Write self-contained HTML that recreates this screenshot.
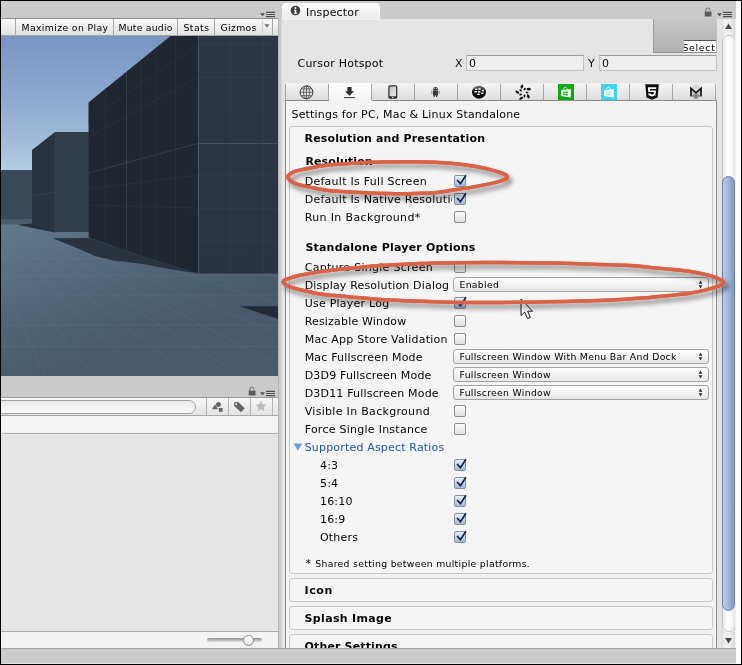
<!DOCTYPE html><html><head><meta charset="utf-8"><title>Inspector</title><style>
html,body{margin:0;padding:0;background:#000;}
#root{will-change:transform;position:relative;width:742px;height:665px;overflow:hidden;background:#000;font-family:"DejaVu Sans","Liberation Sans",sans-serif;font-size:11px;color:#050505;}
#root div,#root span,#root svg{position:absolute;box-sizing:border-box;}
.t{white-space:nowrap;line-height:13px;height:13px;letter-spacing:.18px;}
.b{font-weight:bold;letter-spacing:.14px;}
.m{font-size:9.3px;letter-spacing:.3px;color:#000;}
.cb{width:12px;height:12px;left:454px;border:1px solid #8b8b8b;border-radius:2px;background:linear-gradient(#fdfdfd,#dedede);}
.cb.on{border-color:#87909f;background:linear-gradient(#e4eefb,#9dbce6);}
.pop{left:453px;width:256px;height:15px;border:1px solid #a3a3a3;border-radius:3px;background:linear-gradient(#ffffff,#e6e6e6);}
.grp{left:289px;width:424px;border:1px solid #c6c6c6;border-radius:3px;background:#f5f5f5;}
.fld{height:16px;border:1px solid #c2c2c2;border-top-color:#9d9d9d;background:#eeeeee;}
.vs{width:1px;background:#a9a9a9;}
</style></head><body><div id="root">
<div style="left:1px;top:1px;width:735px;height:663px;background:#cbcbcb"></div>
<div style="left:736px;top:1px;width:5px;height:663px;background:#fff"></div>
<div style="left:1px;top:663px;width:735px;height:1px;background:#e4e4e4"></div>
<div style="left:1px;top:18px;width:277px;height:1px;background:#909090"></div>
<div style="left:1px;top:19px;width:277px;height:17px;background:linear-gradient(#f9f9f9,#e2e2e2);border-bottom:1px solid #a5a5a5"></div>
<div class="vs" style="left:15px;top:19px;height:16px"></div>
<div class="vs" style="left:113px;top:19px;height:16px"></div>
<div class="vs" style="left:177px;top:19px;height:16px"></div>
<div class="vs" style="left:214px;top:19px;height:16px"></div>
<div class="vs" style="left:272px;top:19px;height:16px"></div>
<div class="vs" style="left:262px;top:21px;height:12px;background:#cfcfcf"></div>
<span class="t m" style="left:21.5px;top:21px;letter-spacing:.37px">Maximize on Play</span>
<span class="t m" style="left:118.5px;top:21px;letter-spacing:.22px">Mute audio</span>
<span class="t m" style="left:183.5px;top:21px;letter-spacing:.44px">Stats</span>
<span class="t m" style="left:220.5px;top:21px;letter-spacing:.33px">Gizmos</span>
<svg style="left:263.5px;top:24px" width="6" height="4" viewBox="0 0 6 4"><path d="M.4 .3h5.2L3 3.6z" fill="#707070"/></svg>
<svg style="left:260px;top:11px" width="16" height="8" viewBox="0 0 16 8"><path d="M0 2.2h5L2.5 5.2z" fill="#505050"/><path d="M6 1.3h9M6 3.5h9M6 5.7h9" stroke="#505050" stroke-width="1.2"/></svg>
<svg style="left:1px;top:36px" width="277" height="340" viewBox="1 36 277 340">
<defs>
<linearGradient id="sky" gradientUnits="userSpaceOnUse" x1="0" y1="36" x2="0" y2="174"><stop offset="0" stop-color="#7895c3"/><stop offset=".45" stop-color="#8ca9cf"/><stop offset=".8" stop-color="#a3bfdb"/><stop offset="1" stop-color="#b6d0e6"/></linearGradient>
<linearGradient id="gnd" gradientUnits="userSpaceOnUse" x1="0" y1="224" x2="60" y2="376"><stop offset="0" stop-color="#62798d"/><stop offset=".5" stop-color="#52677a"/><stop offset="1" stop-color="#47596a"/></linearGradient>
<linearGradient id="ff" x1="0" y1="0" x2="0" y2="1"><stop offset="0" stop-color="#2c3642"/><stop offset="1" stop-color="#2a333f"/></linearGradient>
<clipPath id="gc"><rect x="1" y="219" width="277" height="157"/></clipPath>
</defs>
<rect x="1" y="36" width="277" height="195" fill="url(#sky)"/>
<rect x="1" y="219" width="277" height="157" fill="url(#gnd)"/>
<g stroke="#7a90a4" stroke-width=".8" fill="none" opacity=".2" clip-path="url(#gc)"><path d="M-35.2,224L-51,376M-29.4,224L-3,376M-23.5,224L45,376M-17.8,224L92,376M-12.0,224L140,376M-6.1,224L189,376M0.3,224L241,376M7.4,224L300,376M17.1,224L380,376M31.7,224L500,376M56.0,224L700,376"/><path d="M1,246.5H278M1,258.5H278M1,275.5H278M1,295H278M1,325H278M1,346.5H278"/></g>
<polygon points="1,170 32,170 32,219 1,219" fill="#3a4959"/>
<rect x="1" y="219" width="31" height="5.5" fill="#4a5d6f"/>
<polygon points="32,150 55,132 55,232 32,224" fill="#29333f"/>
<polygon points="55,132 89,132 89,232 55,232" fill="#323e4a"/>
<polygon points="17,224.7 32,223.6 55,231.7 55,232.6 40,229.5" fill="#252e39"/>
<polygon points="52.8,238.3 88.7,238 140,255.5 198.5,273.5 170,269.3 140,263.4 113.2,260.4 94.3,255.7 75,247.2" fill="#293340"/>
<polygon points="88.5,102.5 170.5,36 198.5,36 198.5,273.5 140,255.5 88.7,237.7" fill="#20262f"/>
<polygon points="198.5,36 278,36 278,273.5 198.5,273.5" fill="url(#ff)"/>
<polygon points="239.5,306.2 278,306.2 278,319" fill="#222a35"/>
<g stroke="#3b4955" stroke-width="1" fill="none" opacity=".32">
<path d="M198.5,44.5H278M198.5,77.5H278M198.5,110H278M198.5,175.5H278M198.5,208.5H278M198.5,241.5H278M230.5,36V273M263.5,36V273"/>
</g>
<path d="M198.5,36V273.5M198.5,143.5H278" stroke="#4a5b61" stroke-width="1" fill="none" opacity=".8"/>
<path d="M88.5,172.9L198.5,143.3M126.5,72V250" stroke="#3b494f" stroke-width="1" fill="none" opacity=".75"/>
<g stroke="#29323c" stroke-width="1" fill="none" opacity=".8">
<path d="M105.5,89V243M156.5,47V260M175.5,36V266M141,60V255M88.5,137L198.5,77M88.5,205L198.5,208M88.5,120L198.5,44M88.5,189L198.5,175"/>
</g>
<g stroke="#3d4a57" stroke-width="1" fill="none" opacity=".6">
<path d="M55,132V232M32,196L55,192H89M1,196H32M72,132V232M16,170V219"/>
</g>
</svg>
<svg style="left:247.8px;top:386.1px" width="9" height="10" viewBox="0 0 9 10"><path d="M1.8 4.8V3A2.05 2.05 0 0 1 5.9 3V3.6" fill="none" stroke="#6c6c6c" stroke-width="1"/><rect x=".7" y="4.6" width="6.8" height="4.9" fill="#5c5c5c"/></svg>
<svg style="left:260px;top:390.2px" width="16" height="8" viewBox="0 0 16 8"><path d="M0 2.2h5L2.5 5.2z" fill="#505050"/><path d="M6 1.3h9M6 3.5h9M6 5.7h9" stroke="#505050" stroke-width="1.2"/></svg>
<div style="left:1px;top:397px;width:277px;height:1px;background:#9a9a9a"></div>
<div style="left:1px;top:398px;width:277px;height:18px;background:linear-gradient(#f8f8f8,#e3e3e3);border-bottom:1px solid #a8a8a8"></div>
<div style="left:-20px;top:400px;width:216px;height:14px;border:1px solid #a0a0a0;border-radius:7px;background:linear-gradient(#e9e9e9,#fbfbfb)"></div>
<div class="vs" style="left:206px;top:398px;height:17px;background:#b4b4b4"></div>
<div class="vs" style="left:228px;top:398px;height:17px;background:#b4b4b4"></div>
<div class="vs" style="left:250px;top:398px;height:17px;background:#b4b4b4"></div>
<div class="vs" style="left:272px;top:398px;height:17px;background:#b4b4b4"></div>
<svg style="left:211px;top:401px" width="13" height="12" viewBox="0 0 13 12"><circle cx="7.4" cy="3.4" r="2.5" fill="#676767"/><path d="M1 8.3L4 3.2L7 8.3z" fill="#676767"/><rect x="7.8" y="7" width="3.8" height="3.8" fill="#676767"/></svg>
<svg style="left:233px;top:401px" width="13" height="12" viewBox="0 0 13 12"><path d="M1 1.2L5 0.8L11.8 7.2L8 11.2L1.2 5z" fill="#666"/><circle cx="3.2" cy="3" r="1" fill="#eee"/></svg>
<svg style="left:255px;top:400px" width="12" height="12" viewBox="0 0 12 12"><path d="M6 .6L7.5 4.4L11.6 4.6L8.4 7.2L9.5 11.2L6 8.9L2.5 11.2L3.6 7.2L.4 4.6L4.5 4.4z" fill="#b9b9b9"/></svg>
<div style="left:1px;top:416px;width:277px;height:17px;background:#f4f4f4"></div>
<div style="left:1px;top:433px;width:277px;height:1px;background:#b2b2b2"></div>
<div style="left:1px;top:434px;width:277px;height:197px;background:#e5e5e5"></div>
<div style="left:1px;top:631px;width:277px;height:1px;background:#a9a9a9"></div>
<div style="left:1px;top:632px;width:277px;height:16px;background:#f3f3f3"></div>
<div style="left:207px;top:638px;width:55px;height:4px;border-radius:2px;background:linear-gradient(#8c8c8c,#bdbdbd 55%,#dcdcdc)"></div>
<div style="left:243.2px;top:634.5px;width:11px;height:11px;border:1px solid #8c8c8c;border-radius:6px;background:linear-gradient(#ffffff,#e4e4e4)"></div>
<div style="left:1px;top:648px;width:735px;height:1px;background:#a2a2a2"></div>
<div style="left:1px;top:649px;width:735px;height:14px;background:#cbcbcb"></div>
<div style="left:278px;top:19px;width:1px;height:629px;background:#b3b3b3"></div>
<div style="left:282px;top:19px;width:454px;height:629px;background:#e5e5e5"></div>
<div style="left:281px;top:19px;width:1px;height:629px;background:#d6d6d6"></div>
<div style="left:282px;top:3px;width:98px;height:17px;border:1px solid #f8f8f8;border-bottom:1px solid #f1f1f1;border-radius:4px 4px 0 0;background:linear-gradient(#fbfbfb,#ebebeb)"></div>
<svg style="left:290px;top:5px" width="11" height="11" viewBox="0 0 11 11"><circle cx="5.5" cy="5.5" r="4.8" fill="#3e3e3e"/><circle cx="5.4" cy="3.1" r="1" fill="#fff"/><path d="M4 4.8h2.3v3h.9v1H3.9v-1h.9v-2H4z" fill="#fff"/></svg>
<span class="t" style="left:306px;top:6px">Inspector</span>
<svg style="left:703.5px;top:7.2px" width="9" height="10" viewBox="0 0 9 10"><path d="M1.8 4.8V3A2.05 2.05 0 0 1 5.9 3V3.6" fill="none" stroke="#6c6c6c" stroke-width="1"/><rect x=".7" y="4.6" width="6.8" height="4.9" fill="#5c5c5c"/></svg>
<svg style="left:717px;top:11px" width="16" height="8" viewBox="0 0 16 8"><path d="M0 2.2h5L2.5 5.2z" fill="#505050"/><path d="M6 1.3h9M6 3.5h9M6 5.7h9" stroke="#505050" stroke-width="1.2"/></svg>
<div style="left:653px;top:19px;width:64px;height:34px;background:linear-gradient(#c6c6c6,#b3b3b3);border-left:1px solid #9b9b9b;border-bottom:1px solid #8f8f8f"></div>
<div style="left:684px;top:40px;width:32px;height:12px;background:#fff;border-top:1px solid #555;overflow:hidden"><span class="t m" style="left:-1.5px;top:-0.5px;color:#000;letter-spacing:.72px">Select</span></div>
<span class="t" style="left:297.5px;top:57px;letter-spacing:.22px">Cursor Hotspot</span>
<span class="t" style="left:455px;top:57px">X</span>
<div class="fld" style="left:466px;top:55px;width:118px"></div><span class="t" style="left:469px;top:57px">0</span>
<span class="t" style="left:588px;top:57px">Y</span>
<div class="fld" style="left:599px;top:55px;width:118px"></div><span class="t" style="left:602px;top:57px">0</span>
<div style="left:285px;top:83px;width:432px;height:18px;background:linear-gradient(#f4f4f4,#dcdcdc);border-top:1px solid #f0f0f0"></div>
<div style="left:329px;top:83px;width:42px;height:18px;background:linear-gradient(#ffffff,#f3f3f3)"></div>
<div class="vs" style="left:285px;top:84px;height:16px;background:#a6a6a6"></div>
<div class="vs" style="left:328px;top:84px;height:16px;background:#a6a6a6"></div>
<div class="vs" style="left:371px;top:84px;height:16px;background:#a6a6a6"></div>
<div class="vs" style="left:414px;top:84px;height:16px;background:#a6a6a6"></div>
<div class="vs" style="left:457px;top:84px;height:16px;background:#a6a6a6"></div>
<div class="vs" style="left:500px;top:84px;height:16px;background:#a6a6a6"></div>
<div class="vs" style="left:543px;top:84px;height:16px;background:#a6a6a6"></div>
<div class="vs" style="left:586px;top:84px;height:16px;background:#a6a6a6"></div>
<div class="vs" style="left:629px;top:84px;height:16px;background:#a6a6a6"></div>
<div class="vs" style="left:672px;top:84px;height:16px;background:#a6a6a6"></div>
<div class="vs" style="left:715px;top:84px;height:16px;background:#a6a6a6"></div>
<svg style="left:299px;top:85px" width="15" height="15" viewBox="0 0 15 15"><g fill="none" stroke="#484848" stroke-width=".75"><circle cx="7.5" cy="7.3" r="6.4" fill="#e4e4e4" stroke="#333" stroke-width="1"/><ellipse cx="7.5" cy="7.3" rx="3" ry="6.4"/><path d="M7.5 .9v12.8M1.1 7.3h12.8M2.2 3.9h10.6M2.2 10.7h10.6"/></g></svg>
<svg style="left:343px;top:86px" width="13" height="13" viewBox="0 0 13 13"><path d="M4.4 1h4.2v4.3h2.5L6.5 9.8L1.9 5.3h2.5z" fill="#2d2d2d"/><path d="M1 11.6h11" stroke="#3a3a3a" stroke-width="1"/></svg>
<svg style="left:387.8px;top:85px" width="10" height="15" viewBox="0 0 10 15"><defs><linearGradient id="ph" x1="0" y1="0" x2="1" y2="1"><stop offset="0" stop-color="#c4c4c4"/><stop offset="1" stop-color="#ececec"/></linearGradient></defs><rect x=".3" y=".2" width="9" height="13.6" rx="1.7" fill="#2b2b2b"/><rect x="1.5" y="1.5" width="6.6" height="9.8" fill="url(#ph)"/><circle cx="4.8" cy="12.5" r=".75" fill="#f0f0f0"/></svg>
<svg style="left:430px;top:86px" width="11" height="12" viewBox="0 0 11 12"><g fill="#3b3b3b"><path d="M3 3.9A2.5 2.9 0 0 1 8 3.9z"/><rect x="3" y="4.3" width="5" height="5.2" rx=".5"/><rect x="3.7" y="9" width="1.3" height="2" rx=".5"/><rect x="6" y="9" width="1.3" height="2" rx=".5"/></g><rect x="1.3" y="4.4" width="1.1" height="3.6" rx=".5" fill="#8e8e8e"/><rect x="8.6" y="4.4" width="1.1" height="3.6" rx=".5" fill="#8e8e8e"/><circle cx="4.4" cy="2.5" r=".55" fill="#f4f4f4"/><circle cx="6.6" cy="2.5" r=".55" fill="#f4f4f4"/></svg>
<svg style="left:471px;top:85px" width="16" height="15" viewBox="0 0 16 15"><defs><linearGradient id="bb" x1="0" y1="0" x2="0" y2="1"><stop offset="0" stop-color="#6e7b7b"/><stop offset=".42" stop-color="#141616"/><stop offset="1" stop-color="#000"/></linearGradient></defs><ellipse cx="8" cy="7.2" rx="7.6" ry="7" fill="#fbfbfb"/><ellipse cx="8" cy="7.2" rx="7" ry="6.5" fill="url(#bb)"/><g fill="#fff"><rect x="4" y="3.4" width="2.4" height="1.6" rx=".6"/><rect x="7.3" y="3.2" width="2.4" height="1.6" rx=".6"/><rect x="3.5" y="5.9" width="2.4" height="1.6" rx=".6"/><rect x="7" y="5.9" width="2.4" height="1.6" rx=".6"/><rect x="10.7" y="4.8" width="2.4" height="1.6" rx=".6"/><rect x="6.3" y="8.5" width="2.4" height="1.6" rx=".6"/><rect x="10.1" y="7.45" width="2.4" height="1.6" rx=".6"/></g></svg>
<svg style="left:514.6px;top:84.4px" width="17" height="17" viewBox="-8.5 -8.5 17 17"><g fill="#141414"><path d="M-2.5,0Q-1.2,-1.35 0,-1.35Q1.2,-1.35 2.5,0Q1.2,1.35 0,1.35Q-1.2,1.35 -2.5,0Z" transform="rotate(-104.7) translate(6.2,0) rotate(33)"/><path d="M-1.7,0Q-.8,-.95 0,-.95Q.8,-.95 1.7,0Q.8,.95 0,.95Q-.8,.95 -1.7,0Z" transform="rotate(-71.0) translate(3.6,0) rotate(17)"/><path d="M-2.5,0Q-1.2,-1.35 0,-1.35Q1.2,-1.35 2.5,0Q1.2,1.35 0,1.35Q-1.2,1.35 -2.5,0Z" transform="rotate(-32.7) translate(6.2,0) rotate(33)"/><path d="M-1.7,0Q-.8,-.95 0,-.95Q.8,-.95 1.7,0Q.8,.95 0,.95Q-.8,.95 -1.7,0Z" transform="rotate(1.0) translate(3.6,0) rotate(17)"/><path d="M-2.5,0Q-1.2,-1.35 0,-1.35Q1.2,-1.35 2.5,0Q1.2,1.35 0,1.35Q-1.2,1.35 -2.5,0Z" transform="rotate(39.3) translate(6.2,0) rotate(33)"/><path d="M-1.7,0Q-.8,-.95 0,-.95Q.8,-.95 1.7,0Q.8,.95 0,.95Q-.8,.95 -1.7,0Z" transform="rotate(73.0) translate(3.6,0) rotate(17)"/><path d="M-2.5,0Q-1.2,-1.35 0,-1.35Q1.2,-1.35 2.5,0Q1.2,1.35 0,1.35Q-1.2,1.35 -2.5,0Z" transform="rotate(111.3) translate(6.2,0) rotate(33)"/><path d="M-1.7,0Q-.8,-.95 0,-.95Q.8,-.95 1.7,0Q.8,.95 0,.95Q-.8,.95 -1.7,0Z" transform="rotate(145.0) translate(3.6,0) rotate(17)"/><path d="M-2.5,0Q-1.2,-1.35 0,-1.35Q1.2,-1.35 2.5,0Q1.2,1.35 0,1.35Q-1.2,1.35 -2.5,0Z" transform="rotate(183.3) translate(6.2,0) rotate(33)"/><path d="M-1.7,0Q-.8,-.95 0,-.95Q.8,-.95 1.7,0Q.8,.95 0,.95Q-.8,.95 -1.7,0Z" transform="rotate(217.0) translate(3.6,0) rotate(17)"/></g></svg>
<svg style="left:558px;top:84px" width="16" height="16" viewBox="0 0 16 16"><rect width="16" height="16" fill="#0caa10"/><path d="M5.7 6V4.7A1.7 1.7 0 0 1 8.9 4.2V5.4" fill="none" stroke="#fff" stroke-width=".8" opacity=".9"/><path d="M3 6.2L12.8 5V13.4L3 12z" fill="#fff"/><path d="M5 8L6.8 7.75V9.25H5zM7.3 7.7L9.6 7.35V9.25H7.3zM5 9.7H6.8V11.3L5 11.05zM7.3 9.7H9.6V11.7L7.3 11.4z" fill="#0caa10" opacity="1"/></svg>
<svg style="left:601px;top:84px" width="16" height="16" viewBox="0 0 16 16"><rect width="16" height="16" fill="#3dd5f1"/><path d="M5.7 6V4.7A1.7 1.7 0 0 1 8.9 4.2V5.4" fill="none" stroke="#fff" stroke-width=".8" opacity=".9"/><path d="M3 6.2L12.8 5V13.4L3 12z" fill="#fff"/><path d="M5 8L6.8 7.75V9.25H5zM7.3 7.7L9.6 7.35V9.25H7.3zM5 9.7H6.8V11.3L5 11.05zM7.3 9.7H9.6V11.7L7.3 11.4z" fill="#3dd5f1" opacity="0.55"/></svg>
<svg style="left:645px;top:84px" width="14" height="16" viewBox="0 0 14 16"><path d="M0.3 0.2H13.8L12.6 13.6L7 15.7L1.5 13.6z" fill="#0e0e0e"/><path d="M2.9 3.2H11.3L11.1 5H4.9L5.05 6.4H10.95L10.5 11.3L7 12.4L3.6 11.3L3.4 9.2H5.3L5.4 10L7 10.5L8.7 10L8.9 8.1H3.3z" fill="#fff"/></svg>
<svg style="left:688.5px;top:84px" width="14" height="16" viewBox="0 0 14 16"><path d="M7 .2L12.4 3.4L7 7.6L1.6 3.4z" fill="#d9d9d9"/><path d="M1.6 4V12L7 15.8L12.4 12V4L7 8.6z" fill="#cdcdcd"/><path d="M2.6 11.6L7 9.2L11.4 11.6L7 15.6z" fill="#8a8a8a"/><path d="M2 12.6V4.4L7 8.8L12 4.4V12.6" fill="none" stroke="#161616" stroke-width="1.7" stroke-linejoin="miter"/></svg>
<div style="left:285px;top:100px;width:432px;height:548px;background:#f3f3f3;border:1px solid #8b8b8b;border-bottom:none"></div>
<div style="left:329px;top:100px;width:43px;height:1px;background:#f3f3f3"></div>
<span class="t" style="left:291.5px;top:108px">Settings for PC, Mac &amp; Linux Standalone</span>
<div class="grp" style="top:126px;height:448px"></div>
<div class="grp" style="top:578px;height:24px"></div>
<div class="grp" style="top:606px;height:24px"></div>
<div class="grp" style="top:634px;height:24px;"></div>
<span class="t b" style="left:304.6px;top:132px">Resolution and Presentation</span>
<span class="t b" style="left:305.4px;top:154.5px">Resolution</span>
<span class="t" style="left:304.7px;top:175px;letter-spacing:0.27px">Default Is Full Screen</span>
<div class="cb on" style="top:175px"></div><svg style="left:455px;top:172px" width="14" height="14" viewBox="0 0 14 14"><path d="M2 8L5.5 11.6L10.9 3.2" fill="none" stroke="#18243f" stroke-width="1.7"/></svg>
<span class="t" style="left:304.7px;top:193px;letter-spacing:0.27px;width:147.5px;overflow:hidden">Default Is Native Resolution</span>
<div class="cb on" style="top:193px"></div><svg style="left:455px;top:190px" width="14" height="14" viewBox="0 0 14 14"><path d="M2 8L5.5 11.6L10.9 3.2" fill="none" stroke="#18243f" stroke-width="1.7"/></svg>
<span class="t" style="left:304.7px;top:211px;letter-spacing:0.36px">Run In Background*</span>
<div class="cb" style="top:211px"></div>
<span class="t b" style="left:305.4px;top:241px;letter-spacing:.2px">Standalone Player Options</span>
<span class="t" style="left:304.7px;top:261px;letter-spacing:0.28px">Capture Single Screen</span>
<div class="cb" style="top:261px"></div>
<span class="t" style="left:304.7px;top:279px">Display Resolution Dialog</span>
<div class="pop" style="top:277px"></div><span class="t m" style="left:459.5px;top:278px">Enabled</span>
<svg style="left:697px;top:280px" width="7" height="9" viewBox="0 0 7 9"><path d="M3.5 .6L5.4 3.8H1.6zM3.5 8.4L5.4 5.2H1.6z" fill="#2e2e2e"/></svg>
<span class="t" style="left:304.7px;top:297px;letter-spacing:0.24px">Use Player Log</span>
<div class="cb on" style="top:297px"></div><svg style="left:455px;top:294px" width="14" height="14" viewBox="0 0 14 14"><path d="M2 8L5.5 11.6L10.9 3.2" fill="none" stroke="#18243f" stroke-width="1.7"/></svg>
<span class="t" style="left:304.7px;top:315px">Resizable Window</span>
<div class="cb" style="top:315px"></div>
<span class="t" style="left:304.7px;top:333px;letter-spacing:0.22px">Mac App Store Validation</span>
<div class="cb" style="top:333px"></div>
<span class="t" style="left:304.7px;top:351px">Mac Fullscreen Mode</span>
<div class="pop" style="top:349px"></div><span class="t m" style="left:459.5px;top:350px">Fullscreen Window With Menu Bar And Dock</span>
<svg style="left:697px;top:352px" width="7" height="9" viewBox="0 0 7 9"><path d="M3.5 .6L5.4 3.8H1.6zM3.5 8.4L5.4 5.2H1.6z" fill="#2e2e2e"/></svg>
<span class="t" style="left:304.7px;top:369px">D3D9 Fullscreen Mode</span>
<div class="pop" style="top:367px"></div><span class="t m" style="left:459.5px;top:368px">Fullscreen Window</span>
<svg style="left:697px;top:370px" width="7" height="9" viewBox="0 0 7 9"><path d="M3.5 .6L5.4 3.8H1.6zM3.5 8.4L5.4 5.2H1.6z" fill="#2e2e2e"/></svg>
<span class="t" style="left:304.7px;top:387px">D3D11 Fullscreen Mode</span>
<div class="pop" style="top:385px"></div><span class="t m" style="left:459.5px;top:386px">Fullscreen Window</span>
<svg style="left:697px;top:388px" width="7" height="9" viewBox="0 0 7 9"><path d="M3.5 .6L5.4 3.8H1.6zM3.5 8.4L5.4 5.2H1.6z" fill="#2e2e2e"/></svg>
<span class="t" style="left:304.7px;top:405px;letter-spacing:0.31px">Visible In Background</span>
<div class="cb" style="top:405px"></div>
<span class="t" style="left:304.7px;top:423px;letter-spacing:0.26px">Force Single Instance</span>
<div class="cb" style="top:423px"></div>
<span class="t" style="left:304.7px;top:441px;color:#2152b8">Supported Aspect Ratios</span>
<svg style="left:293px;top:443px" width="10" height="9" viewBox="0 0 10 9"><path d="M.6 .4H9.2L4.9 7.8z" fill="#7497ea"/></svg>
<span class="t" style="left:320px;top:459px">4:3</span>
<div class="cb on" style="top:459px"></div><svg style="left:455px;top:456px" width="14" height="14" viewBox="0 0 14 14"><path d="M2 8L5.5 11.6L10.9 3.2" fill="none" stroke="#18243f" stroke-width="1.7"/></svg>
<span class="t" style="left:320px;top:477px">5:4</span>
<div class="cb on" style="top:477px"></div><svg style="left:455px;top:474px" width="14" height="14" viewBox="0 0 14 14"><path d="M2 8L5.5 11.6L10.9 3.2" fill="none" stroke="#18243f" stroke-width="1.7"/></svg>
<span class="t" style="left:320px;top:495px">16:10</span>
<div class="cb on" style="top:495px"></div><svg style="left:455px;top:492px" width="14" height="14" viewBox="0 0 14 14"><path d="M2 8L5.5 11.6L10.9 3.2" fill="none" stroke="#18243f" stroke-width="1.7"/></svg>
<span class="t" style="left:320px;top:513px">16:9</span>
<div class="cb on" style="top:513px"></div><svg style="left:455px;top:510px" width="14" height="14" viewBox="0 0 14 14"><path d="M2 8L5.5 11.6L10.9 3.2" fill="none" stroke="#18243f" stroke-width="1.7"/></svg>
<span class="t" style="left:320px;top:531px">Others</span>
<div class="cb on" style="top:531px"></div><svg style="left:455px;top:528px" width="14" height="14" viewBox="0 0 14 14"><path d="M2 8L5.5 11.6L10.9 3.2" fill="none" stroke="#18243f" stroke-width="1.7"/></svg>
<span class="t m" style="left:305.6px;top:556.5px"><span style="position:static;font-size:11px;line-height:10px">*</span> <span style="position:static;margin-left:.6px">Shared setting between multiple platforms.</span></span>
<span class="t b" style="left:304.6px;top:584px;letter-spacing:.55px">Icon</span>
<span class="t b" style="left:304.6px;top:612px;letter-spacing:.33px">Splash Image</span>
<span class="t b" style="left:304.6px;top:640px">Other Settings</span>
<div style="left:721px;top:19px;width:15px;height:629px;background:linear-gradient(90deg,#dedede,#f0f0f0 30%,#f0f0f0 60%,#d4d4d4)"></div>
<svg style="left:724px;top:23px" width="9" height="7" viewBox="0 0 9 7"><path d="M4.5 .6L8 6H1z" fill="#4a4a4a"/></svg>
<svg style="left:724px;top:637px" width="9" height="7" viewBox="0 0 9 7"><path d="M4.5 6.4L8 1H1z" fill="#4a4a4a"/></svg>
<div style="left:722px;top:35px;width:14px;height:597px;border-radius:7px;border:1px solid #c9c9c9;background:linear-gradient(90deg,#e9e9e9,#ffffff 40%,#fdfdfd 60%,#e4e4e4)"></div>
<div style="left:722px;top:176px;width:13px;height:435px;border-radius:7px;border:1px solid #6f84a8;background:linear-gradient(90deg,#b9cbe8,#a4b9dc 45%,#7f98c2)"></div>
<div style="left:735px;top:19px;width:1px;height:629px;background:#eef0fb"></div>
<div style="left:1px;top:648px;width:735px;height:1px;background:#a2a2a2"></div>
<div style="left:1px;top:649px;width:735px;height:14px;background:#cbcbcb"></div>
<svg style="left:519.1px;top:297.2px" width="17" height="24" viewBox="0 0 17 24"><path d="M2 2V18.6L5.7 15.2L8.6 21.6L11.4 20.4L8.6 14.2H13.6z" fill="#fff" stroke="#141824" stroke-width="1" stroke-linejoin="miter"/></svg>
<svg style="left:0;top:0" width="742" height="665" viewBox="0 0 742 665"><defs><filter id="sh" x="-5%" y="-50%" width="110%" height="220%"><feGaussianBlur in="SourceAlpha" stdDeviation="2.7"/><feOffset dx="2.5" dy="4.3"/><feComponentTransfer><feFuncA type="linear" slope=".46"/></feComponentTransfer><feMerge><feMergeNode/><feMergeNode in="SourceGraphic"/></feMerge></filter></defs><g fill="none" stroke="#d9644a" stroke-width="3.5" filter="url(#sh)"><path d="M288.0,176.9C288.0,175.9 288.6,175.2 290.0,174.2C291.4,173.2 292.5,172.0 296.2,170.9C299.9,169.8 306.7,168.6 312.3,167.6C317.9,166.6 323.7,165.5 330.0,164.8C336.3,164.1 343.3,164.0 350.0,163.6C356.7,163.2 362.5,162.6 370.0,162.3C377.5,162.0 387.5,161.8 395.0,161.7C402.5,161.6 408.3,161.7 415.0,161.8C421.7,161.9 429.2,162.1 435.0,162.3C440.8,162.5 443.5,162.5 450.0,163.2C456.5,163.8 466.7,165.0 474.0,166.2C481.3,167.4 489.1,169.3 494.0,170.6C498.9,171.9 501.4,172.9 503.6,173.9C505.8,174.9 507.2,175.7 507.2,176.7C507.2,177.7 505.8,178.9 503.6,179.9C501.4,180.9 498.9,181.7 494.0,182.9C489.1,184.1 481.3,185.6 474.0,186.9C466.7,188.2 456.5,189.6 450.0,190.6C443.5,191.6 440.8,192.3 435.0,192.8C429.2,193.3 421.7,193.3 415.0,193.5C408.3,193.7 402.5,193.8 395.0,193.7C387.5,193.6 377.5,193.4 370.0,193.1C362.5,192.8 356.7,192.5 350.0,192.1C343.3,191.7 336.3,191.4 330.0,190.7C323.7,190.0 317.9,188.9 312.3,187.8C306.7,186.7 299.9,185.2 296.2,183.9C292.5,182.6 291.4,181.4 290.0,180.2C288.6,179.0 288.0,177.9 288.0,176.9Z" transform="translate(-.5 0)"/><path d="M288.0,176.9C288.0,175.9 288.6,175.2 290.0,174.2C291.4,173.2 292.5,172.0 296.2,170.9C299.9,169.8 306.7,168.6 312.3,167.6C317.9,166.6 323.7,165.5 330.0,164.8C336.3,164.1 343.3,164.0 350.0,163.6C356.7,163.2 362.5,162.6 370.0,162.3C377.5,162.0 387.5,161.8 395.0,161.7C402.5,161.6 408.3,161.7 415.0,161.8C421.7,161.9 429.2,162.1 435.0,162.3C440.8,162.5 443.5,162.5 450.0,163.2C456.5,163.8 466.7,165.0 474.0,166.2C481.3,167.4 489.1,169.3 494.0,170.6C498.9,171.9 501.4,172.9 503.6,173.9C505.8,174.9 507.2,175.7 507.2,176.7C507.2,177.7 505.8,178.9 503.6,179.9C501.4,180.9 498.9,181.7 494.0,182.9C489.1,184.1 481.3,185.6 474.0,186.9C466.7,188.2 456.5,189.6 450.0,190.6C443.5,191.6 440.8,192.3 435.0,192.8C429.2,193.3 421.7,193.3 415.0,193.5C408.3,193.7 402.5,193.8 395.0,193.7C387.5,193.6 377.5,193.4 370.0,193.1C362.5,192.8 356.7,192.5 350.0,192.1C343.3,191.7 336.3,191.4 330.0,190.7C323.7,190.0 317.9,188.9 312.3,187.8C306.7,186.7 299.9,185.2 296.2,183.9C292.5,182.6 291.4,181.4 290.0,180.2C288.6,179.0 288.0,177.9 288.0,176.9Z" transform="translate(.5 0)"/><path d="M283.2,282.0C283.2,281.3 283.9,280.5 285.0,279.9C286.1,279.3 287.5,279.0 290.0,278.2C292.5,277.4 295.0,276.4 300.0,275.3C305.0,274.2 313.3,272.7 320.0,271.7C326.7,270.7 333.3,269.9 340.0,269.2C346.7,268.5 353.3,268.0 360.0,267.4C366.7,266.8 370.0,266.2 380.0,265.6C390.0,265.0 410.0,264.0 420.0,263.6C430.0,263.2 433.3,263.1 440.0,263.0C446.7,262.9 450.0,262.8 460.0,262.7C470.0,262.6 486.7,262.6 500.0,262.6C513.3,262.6 526.7,262.7 540.0,262.9C553.3,263.1 565.8,263.4 580.0,263.8C594.2,264.2 613.3,264.7 625.0,265.3C636.7,265.9 642.5,266.7 650.0,267.4C657.5,268.1 663.3,268.6 670.0,269.3C676.7,270.0 684.2,270.6 690.0,271.5C695.8,272.4 700.7,273.3 705.0,274.4C709.3,275.4 713.2,276.8 716.0,277.8C718.8,278.8 720.7,279.6 722.0,280.4C723.3,281.2 723.6,281.7 723.6,282.4C723.6,283.1 723.3,283.6 722.0,284.4C720.7,285.2 718.8,286.1 716.0,287.0C713.2,287.9 709.3,289.1 705.0,290.1C700.7,291.1 695.8,292.3 690.0,293.2C684.2,294.1 676.7,294.8 670.0,295.5C663.3,296.2 657.5,296.8 650.0,297.4C642.5,298.0 636.7,298.6 625.0,299.2C613.3,299.8 594.2,300.7 580.0,301.1C565.8,301.6 553.3,301.7 540.0,301.9C526.7,302.1 513.3,302.4 500.0,302.5C486.7,302.6 470.0,302.5 460.0,302.4C450.0,302.3 446.7,302.2 440.0,302.0C433.3,301.8 430.0,301.7 420.0,301.3C410.0,300.9 390.0,300.1 380.0,299.5C370.0,298.9 366.7,298.3 360.0,297.7C353.3,297.1 346.7,296.7 340.0,296.1C333.3,295.4 326.7,294.9 320.0,293.9C313.3,292.9 305.0,291.0 300.0,289.8C295.0,288.6 292.5,287.8 290.0,286.9C287.5,286.0 286.1,285.1 285.0,284.3C283.9,283.5 283.2,282.7 283.2,282.0Z" transform="translate(-.5 0)"/><path d="M283.2,282.0C283.2,281.3 283.9,280.5 285.0,279.9C286.1,279.3 287.5,279.0 290.0,278.2C292.5,277.4 295.0,276.4 300.0,275.3C305.0,274.2 313.3,272.7 320.0,271.7C326.7,270.7 333.3,269.9 340.0,269.2C346.7,268.5 353.3,268.0 360.0,267.4C366.7,266.8 370.0,266.2 380.0,265.6C390.0,265.0 410.0,264.0 420.0,263.6C430.0,263.2 433.3,263.1 440.0,263.0C446.7,262.9 450.0,262.8 460.0,262.7C470.0,262.6 486.7,262.6 500.0,262.6C513.3,262.6 526.7,262.7 540.0,262.9C553.3,263.1 565.8,263.4 580.0,263.8C594.2,264.2 613.3,264.7 625.0,265.3C636.7,265.9 642.5,266.7 650.0,267.4C657.5,268.1 663.3,268.6 670.0,269.3C676.7,270.0 684.2,270.6 690.0,271.5C695.8,272.4 700.7,273.3 705.0,274.4C709.3,275.4 713.2,276.8 716.0,277.8C718.8,278.8 720.7,279.6 722.0,280.4C723.3,281.2 723.6,281.7 723.6,282.4C723.6,283.1 723.3,283.6 722.0,284.4C720.7,285.2 718.8,286.1 716.0,287.0C713.2,287.9 709.3,289.1 705.0,290.1C700.7,291.1 695.8,292.3 690.0,293.2C684.2,294.1 676.7,294.8 670.0,295.5C663.3,296.2 657.5,296.8 650.0,297.4C642.5,298.0 636.7,298.6 625.0,299.2C613.3,299.8 594.2,300.7 580.0,301.1C565.8,301.6 553.3,301.7 540.0,301.9C526.7,302.1 513.3,302.4 500.0,302.5C486.7,302.6 470.0,302.5 460.0,302.4C450.0,302.3 446.7,302.2 440.0,302.0C433.3,301.8 430.0,301.7 420.0,301.3C410.0,300.9 390.0,300.1 380.0,299.5C370.0,298.9 366.7,298.3 360.0,297.7C353.3,297.1 346.7,296.7 340.0,296.1C333.3,295.4 326.7,294.9 320.0,293.9C313.3,292.9 305.0,291.0 300.0,289.8C295.0,288.6 292.5,287.8 290.0,286.9C287.5,286.0 286.1,285.1 285.0,284.3C283.9,283.5 283.2,282.7 283.2,282.0Z" transform="translate(.5 0)"/></g></svg>
<div style="left:0;top:0;width:742px;height:665px;border:1px solid #000"></div>
</div></body></html>
